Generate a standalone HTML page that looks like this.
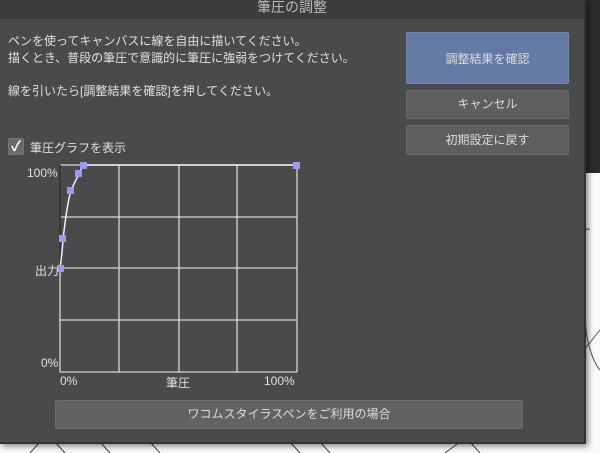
<!DOCTYPE html>
<html><head><meta charset="utf-8"><style>
body{margin:0;width:600px;height:453px;overflow:hidden;background:#fafafa;position:relative;font-family:"Liberation Sans","Noto Sans CJK JP",sans-serif;color:#dcdcdc}
.dark{position:absolute;left:0;top:0;width:600px;height:173px;background:#2b2b2b}
.dlg{position:absolute;left:0;top:0;width:584px;height:442px;background:#4a4a4a;border-right:2px solid #333;border-bottom:2px solid #333;box-shadow:2px 2px 6px rgba(0,0,0,.5)}
.title{position:absolute;left:0;top:0;width:584px;height:19px;background:#3c3c3c;text-align:center;font-size:14px;line-height:14px;color:#bbb}
.t{position:absolute;font-size:12px;white-space:nowrap;color:#e0e0e0}
.btn{position:absolute;left:406px;width:163px;background:#5e5e5e;border:1px solid #6a6a6a;border-radius:2px;text-align:center;font-size:12px;color:#ddd;box-sizing:border-box}
</style></head><body>
<div class="dark"></div>
<svg style="position:absolute;left:0;top:0" width="600" height="453">
<path d="M590 230 C578 220 582 280 586 330 C590 360 600 370 600 370" stroke="#555" fill="none"/>
<path d="M584 350 L600 330" stroke="#555" fill="none"/>
<path d="M30 453 L40 442 M65 453 L55 442 M110 453 L100 442 M160 453 L150 442 M300 453 L290 442 M330 453 L320 442 M445 453 L460 442 M480 453 L470 442" stroke="#444"/>
</svg>
<div class="dlg">
<div class="title">筆圧の調整</div>
<div class="t" style="left:8px;top:32px">ペンを使ってキャンバスに線を自由に描いてください。</div>
<div class="t" style="left:8px;top:49px">描くとき、普段の筆圧で意識的に筆圧に強弱をつけてください。</div>
<div class="t" style="left:8px;top:82px">線を引いたら[調整結果を確認]を押してください。</div>
<div style="position:absolute;left:8px;top:138px;width:16px;height:17px;background:#6a6a6a;border:1px solid #777;box-sizing:border-box;border-radius:2px;color:#fff;font-size:14px;line-height:15px;text-align:center;font-weight:bold">✓</div>
<div class="t" style="left:30px;top:139px">筆圧グラフを表示</div>
<div class="btn" style="top:32px;height:52px;line-height:52px;background:#6479a3;border-color:#7488b0">調整結果を確認</div>
<div class="btn" style="top:90px;height:29px;line-height:27px">キャンセル</div>
<div class="btn" style="top:125px;height:30px;line-height:28px">初期設定に戻す</div>
<svg style="position:absolute;left:0;top:0" width="584" height="442">
<rect x="60" y="165" width="237" height="207" fill="#4a4a4a"/>
<g stroke="#d8d8d8" stroke-width="1.3" fill="none">
<path d="M60 165H297M60 217H297M60 268H297M60 320H297M60 372H297"/>
<path d="M60 165V372M119 165V372M179 165V372M237 165V372M297 165V372"/>
</g>
<path d="M60 165V268" stroke="#222" stroke-width="1.5"/>
<path d="M60 268 C62 255 63 240 63 239 C66 215 68 200 71 191 C74 183 77 178 79 174 C81 170 82 167 83 165 L297 165" stroke="#f0f0ff" stroke-width="1.5" fill="none"/>
<g fill="#9a9af0"><rect x="80" y="162" width="7" height="7"/><rect x="75" y="170" width="7" height="7"/><rect x="67" y="187" width="7" height="7"/><rect x="59" y="235" width="7" height="7"/><rect x="57" y="265" width="7" height="7"/><rect x="293" y="162" width="7" height="7"/></g>
</svg>
<div class="t" style="left:27px;top:166px">100%</div>
<div class="t" style="left:35px;top:262px">出力</div>
<div class="t" style="left:41px;top:356px">0%</div>
<div class="t" style="left:60px;top:374px">0%</div>
<div class="t" style="left:166px;top:374px">筆圧</div>
<div class="t" style="left:264px;top:374px">100%</div>
<div style="position:absolute;left:55px;top:400px;width:468px;height:29px;background:#626262;border:1px solid #6e6e6e;border-radius:2px;box-sizing:border-box;text-align:center;line-height:27px;font-size:12px;color:#ddd">ワコムスタイラスペンをご利用の場合</div>
</div>
</body></html>
